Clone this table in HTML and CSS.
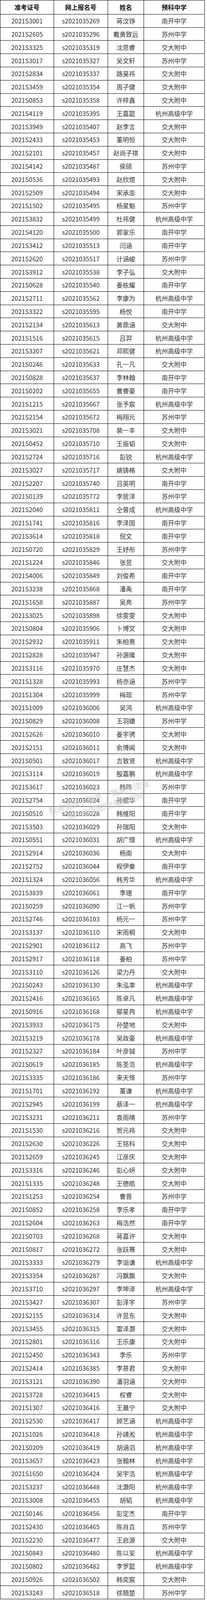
FILE: index.html
```html
<!DOCTYPE html>
<html lang="zh-CN">
<head>
<meta charset="utf-8">
<title>预科名单</title>
<link rel="stylesheet" href="styles.css">
</head>
<body>
<div class="sheet" role="table">
<div class="row head" role="row"><div class="cell" role="columnheader">准考证号</div><div class="cell" role="columnheader">网上报名号</div><div class="cell" role="columnheader">姓名</div><div class="cell" role="columnheader">预科中学</div></div>
<div class="row"><div class="cell">2021S3001</div><div class="cell">s2021035269</div><div class="cell">蒋汶铮</div><div class="cell">南开中学</div></div>
<div class="row"><div class="cell">2021S2605</div><div class="cell">s2021035296</div><div class="cell">戴黄致远</div><div class="cell">苏州中学</div></div>
<div class="row"><div class="cell">2021S3325</div><div class="cell">s2021035319</div><div class="cell">沈思睿</div><div class="cell">交大附中</div></div>
<div class="row"><div class="cell">2021S3017</div><div class="cell">s2021035327</div><div class="cell">吴文轩</div><div class="cell">苏州中学</div></div>
<div class="row"><div class="cell">2021S2834</div><div class="cell">s2021035337</div><div class="cell">路昊祎</div><div class="cell">交大附中</div></div>
<div class="row"><div class="cell">2021S3459</div><div class="cell">s2021035354</div><div class="cell">周子健</div><div class="cell">交大附中</div></div>
<div class="row"><div class="cell">2021S0853</div><div class="cell">s2021035358</div><div class="cell">许梓鑫</div><div class="cell">交大附中</div></div>
<div class="row"><div class="cell">2021S4119</div><div class="cell">s2021035395</div><div class="cell">王嘉懿</div><div class="cell">杭州高级中学</div></div>
<div class="row"><div class="cell">2021S3949</div><div class="cell">s2021035407</div><div class="cell">赵李言</div><div class="cell">交大附中</div></div>
<div class="row"><div class="cell">2021S2433</div><div class="cell">s2021035453</div><div class="cell">董明恒</div><div class="cell">交大附中</div></div>
<div class="row"><div class="cell">2021S2101</div><div class="cell">s2021035457</div><div class="cell">赵尚子祺</div><div class="cell">交大附中</div></div>
<div class="row"><div class="cell">2021S4142</div><div class="cell">s2021035487</div><div class="cell">侯硕</div><div class="cell">苏州中学</div></div>
<div class="row"><div class="cell">2021S0536</div><div class="cell">s2021035493</div><div class="cell">赵欣煜</div><div class="cell">交大附中</div></div>
<div class="row"><div class="cell">2021S2509</div><div class="cell">s2021035494</div><div class="cell">宋承澎</div><div class="cell">交大附中</div></div>
<div class="row"><div class="cell">2021S1502</div><div class="cell">s2021035495</div><div class="cell">杨星魁</div><div class="cell">苏州中学</div></div>
<div class="row"><div class="cell">2021S3832</div><div class="cell">s2021035499</div><div class="cell">杜祎健</div><div class="cell">杭州高级中学</div></div>
<div class="row"><div class="cell">2021S4120</div><div class="cell">s2021035500</div><div class="cell">郭家乐</div><div class="cell">南开中学</div></div>
<div class="row"><div class="cell">2021S3412</div><div class="cell">s2021035513</div><div class="cell">闫涵</div><div class="cell">南开中学</div></div>
<div class="row"><div class="cell">2021S2620</div><div class="cell">s2021035517</div><div class="cell">计涵峻</div><div class="cell">苏州中学</div></div>
<div class="row"><div class="cell">2021S3912</div><div class="cell">s2021035538</div><div class="cell">李子弘</div><div class="cell">交大附中</div></div>
<div class="row"><div class="cell">2021S0628</div><div class="cell">s2021035540</div><div class="cell">姜栋耀</div><div class="cell">南开中学</div></div>
<div class="row"><div class="cell">2021S2711</div><div class="cell">s2021035562</div><div class="cell">李康为</div><div class="cell">杭州高级中学</div></div>
<div class="row"><div class="cell">2021S3322</div><div class="cell">s2021035595</div><div class="cell">杨悦</div><div class="cell">南开中学</div></div>
<div class="row"><div class="cell">2021S2134</div><div class="cell">s2021035613</div><div class="cell">黄鼎涵</div><div class="cell">交大附中</div></div>
<div class="row"><div class="cell">2021S1516</div><div class="cell">s2021035615</div><div class="cell">吕羿</div><div class="cell">杭州高级中学</div></div>
<div class="row"><div class="cell">2021S3207</div><div class="cell">s2021035621</div><div class="cell">邓熙健</div><div class="cell">杭州高级中学</div></div>
<div class="row"><div class="cell">2021S0246</div><div class="cell">s2021035633</div><div class="cell">孔一凡</div><div class="cell">交大附中</div></div>
<div class="row"><div class="cell">2021S0828</div><div class="cell">s2021035637</div><div class="cell">李林翰</div><div class="cell">南开中学</div></div>
<div class="row"><div class="cell">2021S0202</div><div class="cell">s2021035655</div><div class="cell">曹睿豪</div><div class="cell">南开中学</div></div>
<div class="row"><div class="cell">2021S1215</div><div class="cell">s2021035667</div><div class="cell">张予宸</div><div class="cell">杭州高级中学</div></div>
<div class="row"><div class="cell">2021S2154</div><div class="cell">s2021035672</div><div class="cell">梅翔元</div><div class="cell">苏州中学</div></div>
<div class="row"><div class="cell">2021S3021</div><div class="cell">s2021035708</div><div class="cell">裴一丰</div><div class="cell">交大附中</div></div>
<div class="row"><div class="cell">2021S0452</div><div class="cell">s2021035710</div><div class="cell">王振韬</div><div class="cell">交大附中</div></div>
<div class="row"><div class="cell">2021S2724</div><div class="cell">s2021035716</div><div class="cell">彭锐</div><div class="cell">杭州高级中学</div></div>
<div class="row"><div class="cell">2021S3027</div><div class="cell">s2021035717</div><div class="cell">姚铸格</div><div class="cell">交大附中</div></div>
<div class="row"><div class="cell">2021S2207</div><div class="cell">s2021035740</div><div class="cell">吕英明</div><div class="cell">南开中学</div></div>
<div class="row"><div class="cell">2021S0139</div><div class="cell">s2021035772</div><div class="cell">李居洋</div><div class="cell">苏州中学</div></div>
<div class="row"><div class="cell">2021S2040</div><div class="cell">s2021035811</div><div class="cell">仝曾成</div><div class="cell">杭州高级中学</div></div>
<div class="row"><div class="cell">2021S1741</div><div class="cell">s2021035816</div><div class="cell">李泽国</div><div class="cell">南开中学</div></div>
<div class="row"><div class="cell">2021S3614</div><div class="cell">s2021035818</div><div class="cell">倪文</div><div class="cell">南开中学</div></div>
<div class="row"><div class="cell">2021S0720</div><div class="cell">s2021035829</div><div class="cell">王妤彤</div><div class="cell">苏州中学</div></div>
<div class="row"><div class="cell">2021S1224</div><div class="cell">s2021035846</div><div class="cell">张昱</div><div class="cell">交大附中</div></div>
<div class="row"><div class="cell">2021S4006</div><div class="cell">s2021035849</div><div class="cell">刘俊希</div><div class="cell">南开中学</div></div>
<div class="row"><div class="cell">2021S3238</div><div class="cell">s2021035868</div><div class="cell">潘禹</div><div class="cell">南开中学</div></div>
<div class="row"><div class="cell">2021S1658</div><div class="cell">s2021035887</div><div class="cell">吴亮</div><div class="cell">苏州中学</div></div>
<div class="row"><div class="cell">2021S3025</div><div class="cell">s2021035898</div><div class="cell">徐雯雯</div><div class="cell">交大附中</div></div>
<div class="row"><div class="cell">2021S0804</div><div class="cell">s2021035906</div><div class="cell">卜博文</div><div class="cell">交大附中</div></div>
<div class="row"><div class="cell">2021S2932</div><div class="cell">s2021035911</div><div class="cell">朱柏熹</div><div class="cell">交大附中</div></div>
<div class="row"><div class="cell">2021S2828</div><div class="cell">s2021035947</div><div class="cell">孙源隆</div><div class="cell">交大附中</div></div>
<div class="row"><div class="cell">2021S3116</div><div class="cell">s2021035970</div><div class="cell">庄慧杰</div><div class="cell">交大附中</div></div>
<div class="row"><div class="cell">2021S1328</div><div class="cell">s2021035993</div><div class="cell">杨亦涵</div><div class="cell">苏州中学</div></div>
<div class="row"><div class="cell">2021S1304</div><div class="cell">s2021035999</div><div class="cell">梅现</div><div class="cell">苏州中学</div></div>
<div class="row"><div class="cell">2021S1009</div><div class="cell">s2021036006</div><div class="cell">吴鸿</div><div class="cell">杭州高级中学</div></div>
<div class="row"><div class="cell">2021S0829</div><div class="cell">s2021036008</div><div class="cell">王羽婕</div><div class="cell">苏州中学</div></div>
<div class="row"><div class="cell">2021S2626</div><div class="cell">s2021036010</div><div class="cell">姜宇骋</div><div class="cell">交大附中</div></div>
<div class="row"><div class="cell">2021S2151</div><div class="cell">s2021036011</div><div class="cell">俞博闻</div><div class="cell">交大附中</div></div>
<div class="row"><div class="cell">2021S0501</div><div class="cell">s2021036017</div><div class="cell">吉致贤</div><div class="cell">杭州高级中学</div></div>
<div class="row"><div class="cell">2021S3114</div><div class="cell">s2021036019</div><div class="cell">殷嘉鹏</div><div class="cell">杭州高级中学</div></div>
<div class="row"><div class="cell">2021S3617</div><div class="cell">s2021036023</div><div class="cell">韩晔</div><div class="cell">苏州中学</div></div>
<div class="row"><div class="cell">2021S2754</div><div class="cell">s2021036024</div><div class="cell">孙鲲华</div><div class="cell">南开中学</div></div>
<div class="row"><div class="cell">2021S0510</div><div class="cell">s2021036028</div><div class="cell">韩维阳</div><div class="cell">南开中学</div></div>
<div class="row"><div class="cell">2021S3503</div><div class="cell">s2021036029</div><div class="cell">孙瑞阳</div><div class="cell">交大附中</div></div>
<div class="row"><div class="cell">2021S0551</div><div class="cell">s2021036031</div><div class="cell">胡广理</div><div class="cell">杭州高级中学</div></div>
<div class="row"><div class="cell">2021S2914</div><div class="cell">s2021036036</div><div class="cell">杨南</div><div class="cell">交大附中</div></div>
<div class="row"><div class="cell">2021S2752</div><div class="cell">s2021036044</div><div class="cell">程伊秦</div><div class="cell">南开中学</div></div>
<div class="row"><div class="cell">2021S1324</div><div class="cell">s2021036056</div><div class="cell">韩芳华</div><div class="cell">杭州高级中学</div></div>
<div class="row"><div class="cell">2021S3839</div><div class="cell">s2021036061</div><div class="cell">李璁</div><div class="cell">南开中学</div></div>
<div class="row"><div class="cell">2021S0259</div><div class="cell">s2021036090</div><div class="cell">江一帆</div><div class="cell">苏州中学</div></div>
<div class="row"><div class="cell">2021S2746</div><div class="cell">s2021036103</div><div class="cell">杨元一</div><div class="cell">苏州中学</div></div>
<div class="row"><div class="cell">2021S3137</div><div class="cell">s2021036110</div><div class="cell">宋雨桐</div><div class="cell">交大附中</div></div>
<div class="row"><div class="cell">2021S2901</div><div class="cell">s2021036112</div><div class="cell">高飞</div><div class="cell">苏州中学</div></div>
<div class="row"><div class="cell">2021S2917</div><div class="cell">s2021036118</div><div class="cell">姜柏</div><div class="cell">苏州中学</div></div>
<div class="row"><div class="cell">2021S3110</div><div class="cell">s2021036126</div><div class="cell">梁力丹</div><div class="cell">交大附中</div></div>
<div class="row"><div class="cell">2021S0243</div><div class="cell">s2021036130</div><div class="cell">朱泓聿</div><div class="cell">杭州高级中学</div></div>
<div class="row"><div class="cell">2021S2416</div><div class="cell">s2021036165</div><div class="cell">陈卓凡</div><div class="cell">杭州高级中学</div></div>
<div class="row"><div class="cell">2021S0916</div><div class="cell">s2021036168</div><div class="cell">鄢星冉</div><div class="cell">杭州高级中学</div></div>
<div class="row"><div class="cell">2021S3933</div><div class="cell">s2021036175</div><div class="cell">孙楚地</div><div class="cell">交大附中</div></div>
<div class="row"><div class="cell">2021S3219</div><div class="cell">s2021036178</div><div class="cell">吴政豪</div><div class="cell">杭州高级中学</div></div>
<div class="row"><div class="cell">2021S2327</div><div class="cell">s2021036184</div><div class="cell">叶彦铖</div><div class="cell">苏州中学</div></div>
<div class="row"><div class="cell">2021S0619</div><div class="cell">s2021036185</div><div class="cell">陈圣浩</div><div class="cell">杭州高级中学</div></div>
<div class="row"><div class="cell">2021S3335</div><div class="cell">s2021036186</div><div class="cell">来天怿</div><div class="cell">苏州中学</div></div>
<div class="row"><div class="cell">2021S1701</div><div class="cell">s2021036192</div><div class="cell">董谦</div><div class="cell">杭州高级中学</div></div>
<div class="row"><div class="cell">2021S2945</div><div class="cell">s2021036199</div><div class="cell">蔡泽一</div><div class="cell">杭州高级中学</div></div>
<div class="row"><div class="cell">2021S3231</div><div class="cell">s2021036211</div><div class="cell">袁雨晴</div><div class="cell">苏州中学</div></div>
<div class="row"><div class="cell">2021S1530</div><div class="cell">s2021036216</div><div class="cell">贺元祎</div><div class="cell">交大附中</div></div>
<div class="row"><div class="cell">2021S2630</div><div class="cell">s2021036226</div><div class="cell">王铭科</div><div class="cell">交大附中</div></div>
<div class="row"><div class="cell">2021S2659</div><div class="cell">s2021036245</div><div class="cell">江彦庆</div><div class="cell">交大附中</div></div>
<div class="row"><div class="cell">2021S3316</div><div class="cell">s2021036246</div><div class="cell">彭心妍</div><div class="cell">交大附中</div></div>
<div class="row"><div class="cell">2021S1335</div><div class="cell">s2021036248</div><div class="cell">王德皓</div><div class="cell">交大附中</div></div>
<div class="row"><div class="cell">2021S1253</div><div class="cell">s2021036254</div><div class="cell">曹晋</div><div class="cell">苏州中学</div></div>
<div class="row"><div class="cell">2021S0852</div><div class="cell">s2021036258</div><div class="cell">李乐孝</div><div class="cell">南开中学</div></div>
<div class="row"><div class="cell">2021S2604</div><div class="cell">s2021036263</div><div class="cell">梅浩然</div><div class="cell">南开中学</div></div>
<div class="row"><div class="cell">2021S0703</div><div class="cell">s2021036268</div><div class="cell">蒋嘉许</div><div class="cell">交大附中</div></div>
<div class="row"><div class="cell">2021S0817</div><div class="cell">s2021036272</div><div class="cell">张跃骞</div><div class="cell">交大附中</div></div>
<div class="row"><div class="cell">2021S3333</div><div class="cell">s2021036279</div><div class="cell">李诣谦</div><div class="cell">杭州高级中学</div></div>
<div class="row"><div class="cell">2021S3354</div><div class="cell">s2021036287</div><div class="cell">冯飘飘</div><div class="cell">交大附中</div></div>
<div class="row"><div class="cell">2021S3710</div><div class="cell">s2021036297</div><div class="cell">李坤泽</div><div class="cell">杭州高级中学</div></div>
<div class="row"><div class="cell">2021S3427</div><div class="cell">s2021036307</div><div class="cell">彭泽宇</div><div class="cell">苏州中学</div></div>
<div class="row"><div class="cell">2021S2155</div><div class="cell">s2021036314</div><div class="cell">许昱东</div><div class="cell">交大附中</div></div>
<div class="row"><div class="cell">2021S3455</div><div class="cell">s2021036315</div><div class="cell">雷泽灏</div><div class="cell">交大附中</div></div>
<div class="row"><div class="cell">2021S2801</div><div class="cell">s2021036316</div><div class="cell">王乐康</div><div class="cell">交大附中</div></div>
<div class="row"><div class="cell">2021S2450</div><div class="cell">s2021036343</div><div class="cell">李乐</div><div class="cell">苏州中学</div></div>
<div class="row"><div class="cell">2021S2414</div><div class="cell">s2021036385</div><div class="cell">李甚君</div><div class="cell">交大附中</div></div>
<div class="row"><div class="cell">2021S3121</div><div class="cell">s2021036390</div><div class="cell">潘羽涵</div><div class="cell">交大附中</div></div>
<div class="row"><div class="cell">2021S3728</div><div class="cell">s2021036415</div><div class="cell">权睿</div><div class="cell">交大附中</div></div>
<div class="row"><div class="cell">2021S1307</div><div class="cell">s2021036416</div><div class="cell">王晨宁</div><div class="cell">交大附中</div></div>
<div class="row"><div class="cell">2021S2530</div><div class="cell">s2021036417</div><div class="cell">顾艺涵</div><div class="cell">杭州高级中学</div></div>
<div class="row"><div class="cell">2021S1026</div><div class="cell">s2021036418</div><div class="cell">孙靖淞</div><div class="cell">杭州高级中学</div></div>
<div class="row"><div class="cell">2021S0209</div><div class="cell">s2021036419</div><div class="cell">胡涵滔</div><div class="cell">杭州高级中学</div></div>
<div class="row"><div class="cell">2021S3657</div><div class="cell">s2021036423</div><div class="cell">张翰林</div><div class="cell">杭州高级中学</div></div>
<div class="row"><div class="cell">2021S1650</div><div class="cell">s2021036424</div><div class="cell">吴宇浩</div><div class="cell">杭州高级中学</div></div>
<div class="row"><div class="cell">2021S3237</div><div class="cell">s2021036448</div><div class="cell">沈灏阳</div><div class="cell">杭州高级中学</div></div>
<div class="row"><div class="cell">2021S3008</div><div class="cell">s2021036455</div><div class="cell">胡韬</div><div class="cell">杭州高级中学</div></div>
<div class="row"><div class="cell">2021S0146</div><div class="cell">s2021036456</div><div class="cell">彭定杰</div><div class="cell">南开中学</div></div>
<div class="row"><div class="cell">2021S2430</div><div class="cell">s2021036465</div><div class="cell">陈肖垚</div><div class="cell">苏州中学</div></div>
<div class="row"><div class="cell">2021S2230</div><div class="cell">s2021036477</div><div class="cell">王启源</div><div class="cell">交大附中</div></div>
<div class="row"><div class="cell">2021S0843</div><div class="cell">s2021036480</div><div class="cell">陈以安</div><div class="cell">杭州高级中学</div></div>
<div class="row"><div class="cell">2021S0802</div><div class="cell">s2021036482</div><div class="cell">李罗懿</div><div class="cell">杭州高级中学</div></div>
<div class="row"><div class="cell">2021S0926</div><div class="cell">s2021036502</div><div class="cell">韩奕宸</div><div class="cell">交大附中</div></div>
<div class="row"><div class="cell">2021S3243</div><div class="cell">s2021036518</div><div class="cell">徐翘楚</div><div class="cell">苏州中学</div></div>
<div class="watermark" aria-hidden="true">
<div class="wm-line">微信搜索小程序 “高考早知道”</div>
<div class="wm-line">第一时间获取最新资料</div>
</div>
</div>
</body>
</html>
```
FILE: styles.css
```css
:root {
  --head-h: 35.71px;
  --row-h: 33.828px;
}

html, body {
  margin: 0;
  padding: 0;
  background: #ffffff;
}

body {
  font-family: "Noto Sans CJK SC", "Noto Sans", sans-serif;
  color: #333333;
}

.sheet {
  position: relative;
  width: 523px;
  border-left: 1px solid #000000;
  border-top: 1px solid #000000;
  box-sizing: border-box;
}

.row {
  display: grid;
  grid-template-columns: 137px 138px 92px 155px;
  height: var(--row-h);
}

.row.head {
  height: var(--head-h);
}

.cell {
  box-sizing: border-box;
  border-right: 1px solid #000000;
  border-bottom: 1px solid #000000;
  display: flex;
  align-items: center;
  justify-content: center;
  font-size: 16px;
  line-height: 20px;
  white-space: nowrap;
}

.head .cell {
  font-weight: 700;
  color: #111111;
}

.watermark {
  position: absolute;
  left: 95px;
  top: 2022px;
  width: 340px;
  transform: rotate(-16deg);
  transform-origin: center;
  pointer-events: none;
  text-align: center;
}

.wm-line {
  font-size: 20px;
  line-height: 27px;
  font-weight: 700;
  white-space: nowrap;
  color: rgba(255, 255, 255, 0.45);
  -webkit-text-stroke: 1px rgba(140, 140, 140, 0.35);
}
```
